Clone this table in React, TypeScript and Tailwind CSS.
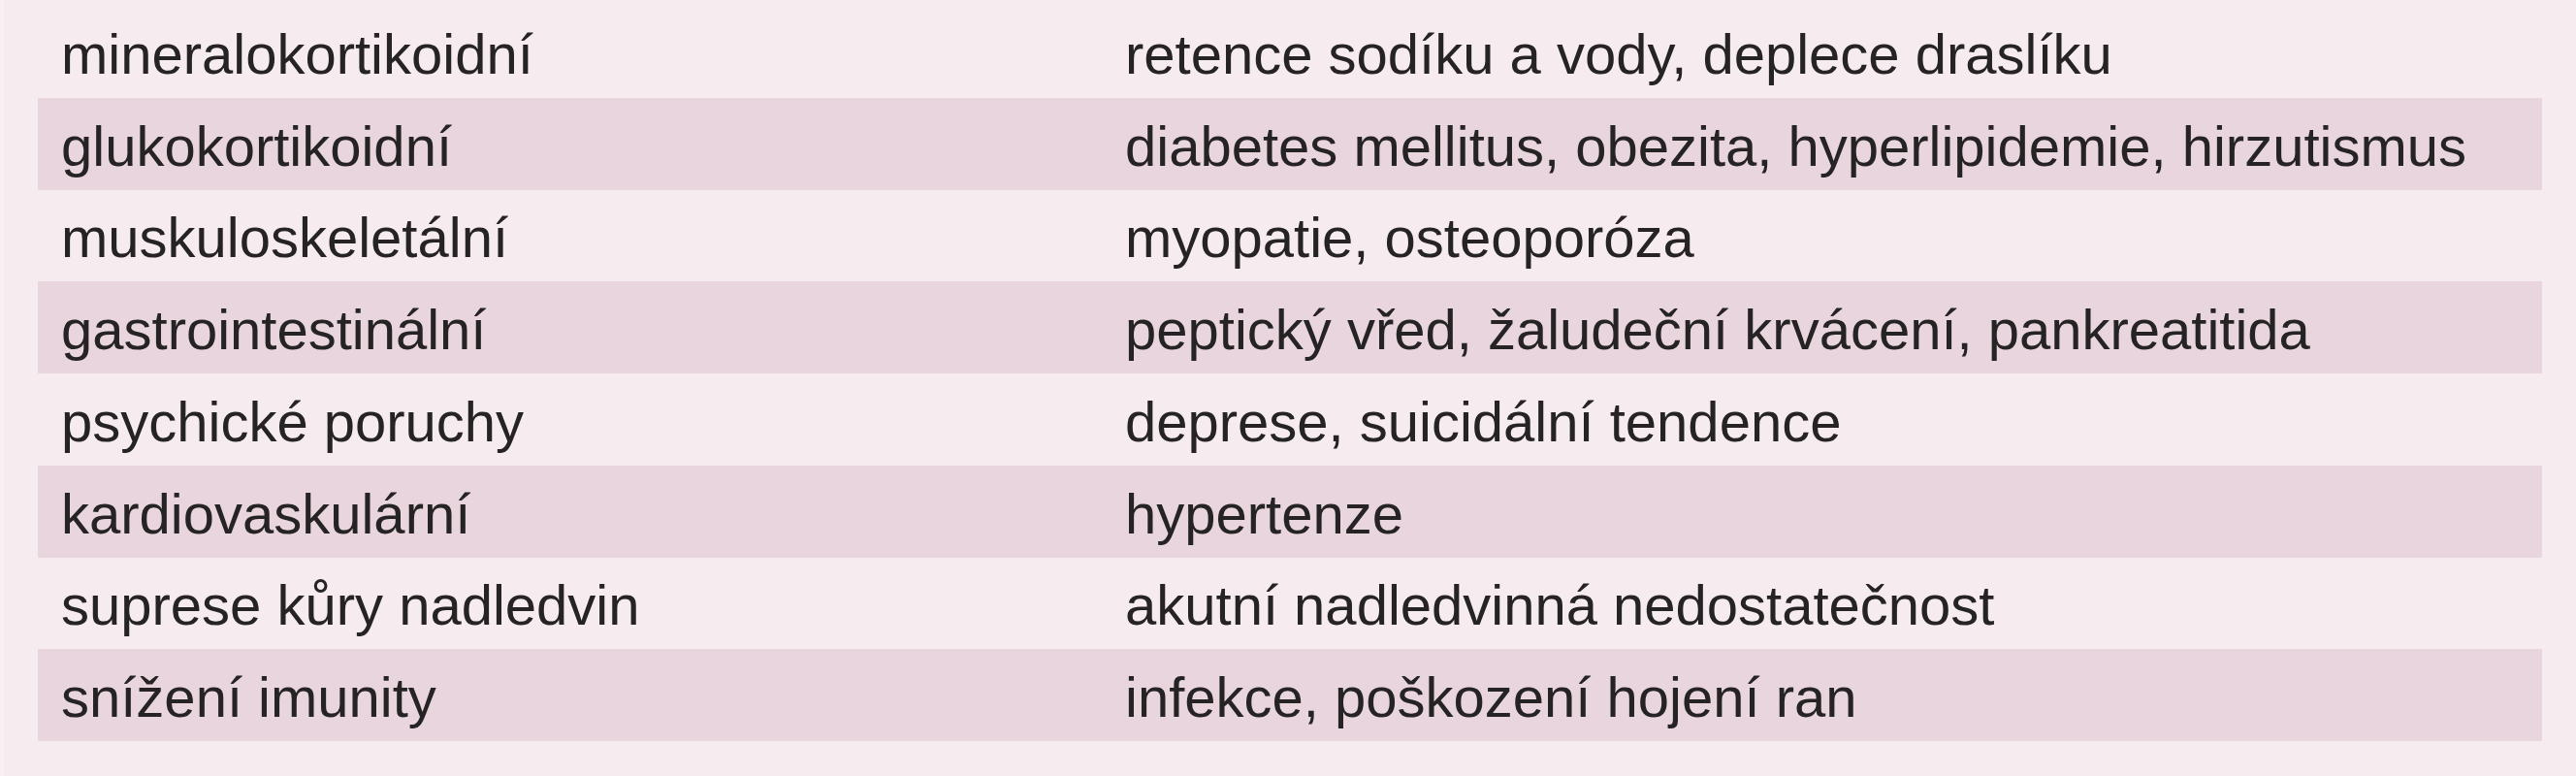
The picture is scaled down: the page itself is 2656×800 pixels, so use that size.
import React from "react";

const rows: [string, string][] = [
  ["mineralokortikoidní", "retence sodíku a vody, deplece draslíku"],
  ["glukokortikoidní", "diabetes mellitus, obezita, hyperlipidemie, hirzutismus"],
  ["muskuloskeletální", "myopatie, osteoporóza"],
  ["gastrointestinální", "peptický vřed, žaludeční krvácení, pankreatitida"],
  ["psychické poruchy", "deprese, suicidální tendence"],
  ["kardiovaskulární", "hypertenze"],
  ["suprese kůry nadledvin", "akutní nadledvinná nedostatečnost"],
  ["snížení imunity", "infekce, poškození hojení ran"],
];

const App = () => {
  return (
    <div className="w-[2656px] h-[800px] bg-[#f6ebef] border-l-4 border-[#f8f0f3] pl-[35px] pr-[35px] pt-[6px] font-['Liberation_Sans',Arial,sans-serif] text-[58px] text-[#262324]">
      {rows.map(([effect, symptoms], i) => (
        <div
          key={i}
          className={`grid grid-cols-[1121px_1fr] items-center h-[94.75px] pt-[4px] ${
            i % 2 === 1 ? "bg-[#e8d5dd]" : ""
          }`}
        >
          <div className="pl-6 whitespace-nowrap">{effect}</div>
          <div className="whitespace-nowrap">{symptoms}</div>
        </div>
      ))}
    </div>
  );
};

export default App;
